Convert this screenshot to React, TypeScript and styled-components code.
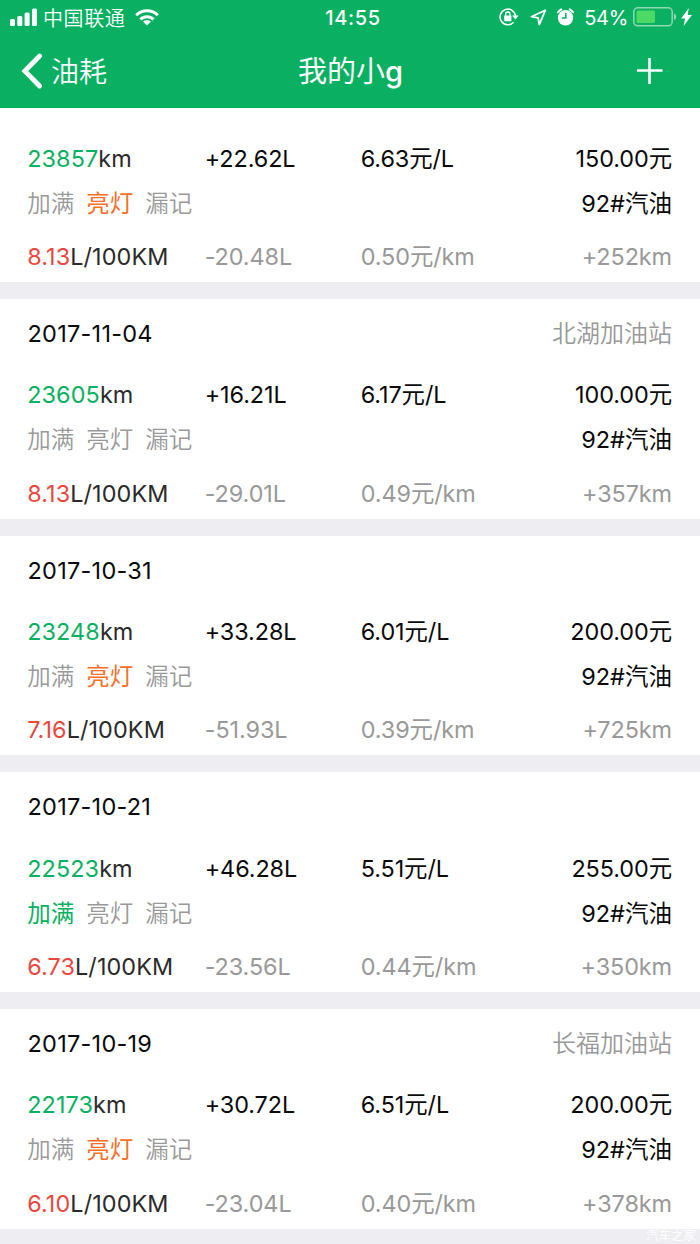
import React from 'react';
import styled, { createGlobalStyle } from 'styled-components';

const GlobalStyle = createGlobalStyle`
  *, *::before, *::after { box-sizing: border-box; }
  body {
    margin: 0;
    background: #eeeef2;
    font-family: Inter, "Noto Sans CJK SC", sans-serif;
  }
`;

const GREEN = '#0ab062';
const GREY = '#999999';

const Screen = styled.div`
  position: relative;
  width: 700px;
  height: 1244px;
  overflow: hidden;
  background: #eeeef2;
  color: #0a0a0a;
`;

const Header = styled.header`
  height: 108px;
  background: ${GREEN};
  color: #fff;
`;

const StatusBar = styled.div`
  display: grid;
  grid-template-columns: 1fr auto 1fr;
  align-items: center;
  height: 36px;
  padding: 0 8px 0 10px;
  font-size: 20px;
  line-height: 24px;
`;

const Carrier = styled.div`
  display: flex;
  align-items: center;
  font-weight: 350;
  svg:first-child { margin: 0 6px 2px 0; }
  svg:last-child { margin: 0 0 2px 10px; }
`;

const CarrierName = styled.span`
  padding-top: 1px;
  letter-spacing: 0.6px;
`;

const Clock = styled.div`
  padding-left: 4px;
  font-weight: 500;
  letter-spacing: 0.7px;
`;

const Indicators = styled.div`
  display: flex;
  justify-content: flex-end;
  align-items: center;
  gap: 10.3px;
  padding-bottom: 2px;
`;

const Power = styled.div`
  display: flex;
  align-items: center;
  gap: 4.5px;
`;

const Percent = styled.span`
  padding-top: 2px;
  font-size: 20px;
  letter-spacing: -0.3px;
`;

const NavBar = styled.nav`
  display: grid;
  grid-template-columns: 1fr auto 1fr;
  align-items: center;
  height: 72px;
  padding: 0 37px 2px 21px;
`;

const Back = styled.div`
  display: flex;
  align-items: center;
  gap: 8px;
  font-size: 28px;
  font-weight: 350;
  line-height: 36px;
`;

const BackLabel = styled.span`
  padding-top: 2px;
`;

const Title = styled.h1`
  margin: 0 0 0 17px;
  padding-top: 2px;
  font-size: 29px;
  font-weight: 500;
  line-height: 36px;
`;

const TitleText = styled.span`
  font-weight: 400;
`;

const AddButton = styled.div`
  display: flex;
  justify-content: flex-end;
`;

const List = styled.main`
  display: flex;
  flex-direction: column;
  gap: 17px;
`;

const Card = styled.section<{ $cut?: boolean }>`
  padding: ${(p) => (p.$cut ? '24.3px' : '0')} 28px 0;
  background: #fff;
  font-size: 23.5px;
  line-height: 30px;
`;

const DateRow = styled.div`
  display: flex;
  justify-content: space-between;
  align-items: center;
  height: 70px;
`;

const DateLabel = styled.span`
  margin-left: -0.5px;
  letter-spacing: 0.25px;
`;

const Station = styled.span`
  color: ${GREY};
  font-size: 24px;
  font-weight: 350;
`;

const Row = styled.div<{ $height: number; $muted?: boolean }>`
  display: grid;
  grid-template-columns: 177.5px 156px 1fr auto;
  align-items: center;
  height: ${(p) => p.$height}px;
  margin-left: -0.8px;
  padding-top: ${(p) => (p.$muted ? '10px' : '0.6px')};
  color: ${(p) => (p.$muted ? GREY : 'inherit')};
  font-size: 23.4px;
  letter-spacing: -0.08px;
`;

const Measure = styled.span`
  color: #2b2b2b;
  letter-spacing: 0.1px;
  white-space: nowrap;
`;

const Figure = styled.span<{ $color: string }>`
  color: ${(p) => p.$color};
`;

const FlagRow = styled.div`
  display: flex;
  justify-content: space-between;
  align-items: center;
  height: 38px;
  margin-left: -0.8px;
  padding-top: 1px;
`;

const Flags = styled.div`
  display: flex;
  gap: 12px;
`;

const Flag = styled.span<{ $color?: string }>`
  color: ${(p) => p.$color ?? GREY};
  font-size: 23.5px;
  font-weight: ${(p) => (p.$color ? 400 : 350)};
`;

const Watermark = styled.span`
  position: absolute;
  right: 4px;
  bottom: 0;
  color: #fff;
  font-size: 12.5px;
  font-weight: 350;
  line-height: 17px;
`;

interface Entry {
  date?: string;
  station?: string;
  odometer: string;
  fuel: string;
  price: string;
  total: string;
  full?: boolean;
  lamp?: boolean;
  average: string;
  used: string;
  cost: string;
  distance: string;
}

const entries: Entry[] = [
  { odometer: '23857', fuel: '+22.62L', price: '6.63元/L', total: '150.00元', lamp: true, average: '8.13', used: '-20.48L', cost: '0.50元/km', distance: '+252km' },
  { date: '2017-11-04', station: '北湖加油站', odometer: '23605', fuel: '+16.21L', price: '6.17元/L', total: '100.00元', average: '8.13', used: '-29.01L', cost: '0.49元/km', distance: '+357km' },
  { date: '2017-10-31', odometer: '23248', fuel: '+33.28L', price: '6.01元/L', total: '200.00元', lamp: true, average: '7.16', used: '-51.93L', cost: '0.39元/km', distance: '+725km' },
  { date: '2017-10-21', odometer: '22523', fuel: '+46.28L', price: '5.51元/L', total: '255.00元', full: true, average: '6.73', used: '-23.56L', cost: '0.44元/km', distance: '+350km' },
  { date: '2017-10-19', station: '长福加油站', odometer: '22173', fuel: '+30.72L', price: '6.51元/L', total: '200.00元', lamp: true, average: '6.10', used: '-23.04L', cost: '0.40元/km', distance: '+378km' },
];

const SignalIcon = () => (
  <svg width="27" height="18" viewBox="0 0 27 18" fill="#fff">
    <rect x="0" y="11" width="5" height="7" rx="1.5" />
    <rect x="7.3" y="8" width="5" height="10" rx="1.5" />
    <rect x="14.6" y="4.5" width="5" height="13.5" rx="1.5" />
    <rect x="22" y="0.5" width="5" height="17.5" rx="1.5" />
  </svg>
);

const WifiIcon = () => (
  <svg width="24" height="18" viewBox="0 0 24 18" fill="none" stroke="#fff" strokeWidth="3">
    <path d="M1.2 7.2a15.3 15.3 0 0 1 21.6 0" />
    <path d="M5.4 11.4a9.4 9.4 0 0 1 13.2 0" />
    <path d="M12 17.6 8 13.6a5.7 5.7 0 0 1 8 0z" fill="#fff" stroke="none" />
  </svg>
);

const RotationLockIcon = () => (
  <svg width="20" height="18" viewBox="0 0 20 18" fill="none" stroke="#fff" strokeWidth="1.5">
    <path d="M14.6 14.2A7.8 7.8 0 1 1 16.6 8" />
    <path d="M13.2 7.6h6.4l-3.2 4z" fill="#fff" stroke="none" />
    <rect x="5.2" y="7.6" width="7.2" height="5.6" rx="0.6" fill="#fff" stroke="none" />
    <path d="M6.6 8V6.2a2.2 2.2 0 0 1 4.4 0V8" strokeWidth="1.3" />
  </svg>
);

const LocationIcon = () => (
  <svg width="17" height="17" viewBox="0 0 17 17" fill="none" stroke="#fff" strokeWidth="1.8" strokeLinejoin="round">
    <path d="M15.3 1.3 1.4 7.7l6.7 1.2 1.2 6.6z" />
  </svg>
);

const AlarmIcon = () => (
  <svg width="17" height="18" viewBox="0 0 17 18" fill="none" stroke="#fff">
    <circle cx="8.5" cy="9.8" r="7.7" fill="#fff" stroke="none" />
    <path d="M0.9 4.3a10 10 0 0 1 3.3-3M16.1 4.3a10 10 0 0 0-3.3-3" strokeWidth="1.9" strokeLinecap="round" />
    <path d="M8.8 5v5H5" stroke={GREEN} strokeWidth="1.5" />
  </svg>
);

const BatteryIcon = () => (
  <svg width="44" height="20" viewBox="0 0 44 20">
    <rect x="0.8" y="0.8" width="38.4" height="18" rx="4" fill="none" stroke="#8ed9b3" strokeWidth="1.5" />
    <rect x="3.5" y="3.5" width="18.5" height="12.5" rx="1.2" fill="#4cd964" />
    <path d="M41 6.6c3 .8 3 5.6 0 6.4z" fill="#8ed9b3" />
  </svg>
);

const BoltIcon = () => (
  <svg width="11" height="18" viewBox="0 0 11 18" fill="#fff">
    <path d="M7.9 0 0.1 10.4h4L2.6 18 10.9 6.9H6.6z" />
  </svg>
);

const BackIcon = () => (
  <svg width="22" height="36" viewBox="0 0 22 36" fill="none" stroke="#fff" strokeWidth="4.8" strokeLinecap="round" strokeLinejoin="miter">
    <path d="M18.6 3 3.8 18l14.8 15" />
  </svg>
);

const PlusIcon = () => (
  <svg width="26" height="26" viewBox="0 0 26 26" stroke="#fff" strokeWidth="2.6">
    <path d="M12.5 0v26M0 12.5h25.5" />
  </svg>
);

const EntryCard = ({ entry }: { entry: Entry }) => (
  <Card $cut={!entry.date}>
    {entry.date && (
      <DateRow>
        <DateLabel>{entry.date}</DateLabel>
        {entry.station && <Station>{entry.station}</Station>}
      </DateRow>
    )}
    <Row $height={52}>
      <Measure><Figure $color={GREEN}>{entry.odometer}</Figure>km</Measure>
      <span>{entry.fuel}</span>
      <span>{entry.price}</span>
      <span>{entry.total}</span>
    </Row>
    <FlagRow>
      <Flags>
        <Flag $color={entry.full ? GREEN : undefined}>加满</Flag>
        <Flag $color={entry.lamp ? '#f7702a' : undefined}>亮灯</Flag>
        <Flag>漏记</Flag>
      </Flags>
      <span>92#汽油</span>
    </FlagRow>
    <Row $height={59.67} $muted>
      <Measure><Figure $color="#e8493f">{entry.average}</Figure>L/100KM</Measure>
      <span>{entry.used}</span>
      <span>{entry.cost}</span>
      <span>{entry.distance}</span>
    </Row>
  </Card>
);

export default function App() {
  return (
    <Screen>
      <GlobalStyle />
      <Header>
        <StatusBar>
          <Carrier><SignalIcon /><CarrierName>中国联通</CarrierName><WifiIcon /></Carrier>
          <Clock>14:55</Clock>
          <Indicators>
            <RotationLockIcon />
            <LocationIcon />
            <AlarmIcon />
            <Power>
              <Percent>54%</Percent>
              <BatteryIcon />
              <BoltIcon />
            </Power>
          </Indicators>
        </StatusBar>
        <NavBar>
          <Back><BackIcon /><BackLabel>油耗</BackLabel></Back>
          <Title><TitleText>我的小</TitleText>g</Title>
          <AddButton><PlusIcon /></AddButton>
        </NavBar>
      </Header>
      <List>
        {entries.map((entry) => <EntryCard key={entry.odometer} entry={entry} />)}
      </List>
      <Watermark>汽车之家</Watermark>
    </Screen>
  );
}
